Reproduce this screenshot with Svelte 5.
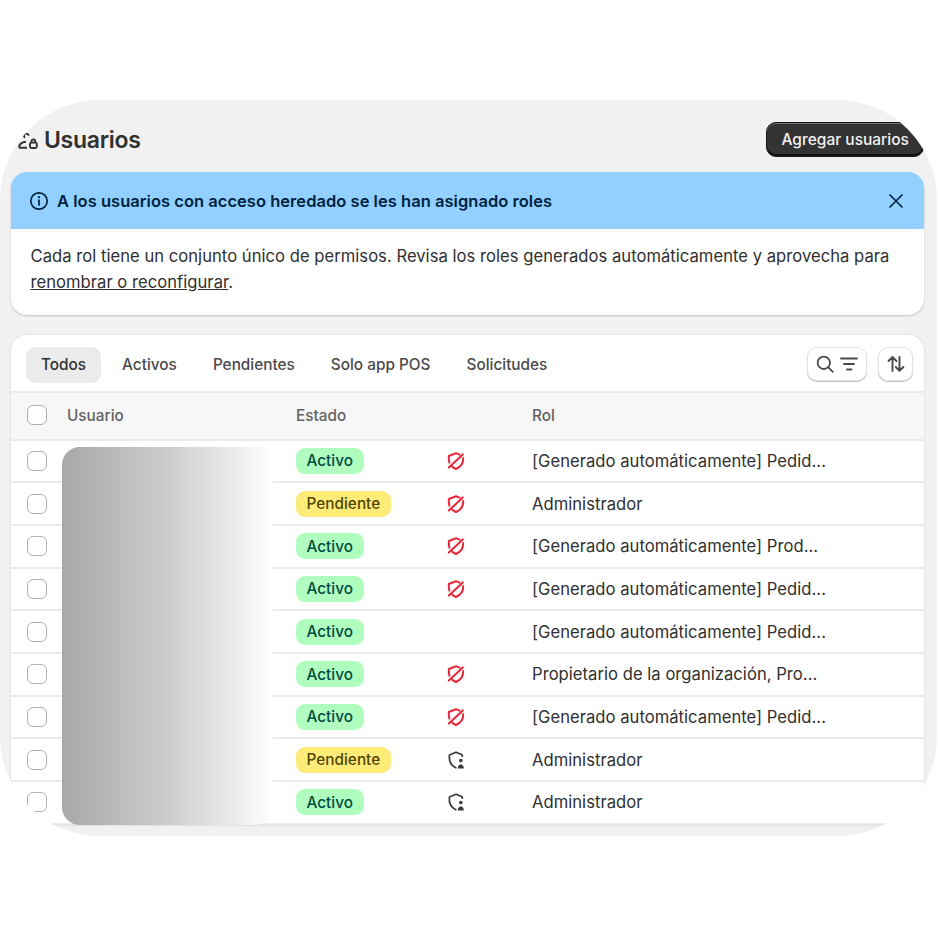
<script>
	const tabs = ['Todos', 'Activos', 'Pendientes', 'Solo app POS', 'Solicitudes'];
	const users = [
		{ status: 'Activo', shield: 'off', role: '[Generado automáticamente] Pedid...' },
		{ status: 'Pendiente', shield: 'off', role: 'Administrador' },
		{ status: 'Activo', shield: 'off', role: '[Generado automáticamente] Prod...' },
		{ status: 'Activo', shield: 'off', role: '[Generado automáticamente] Pedid...' },
		{ status: 'Activo', shield: '', role: '[Generado automáticamente] Pedid...' },
		{ status: 'Activo', shield: 'off', role: 'Propietario de la organización, Pro...' },
		{ status: 'Activo', shield: 'off', role: '[Generado automáticamente] Pedid...' },
		{ status: 'Pendiente', shield: 'person', role: 'Administrador' },
		{ status: 'Activo', shield: 'person', role: 'Administrador' }
	];
</script>

<div class="page">
	<main class="panel">
		<header class="top">
			<h1>
				<svg class="title-icon" viewBox="0 0 20 16" width="20" height="16" fill="none" stroke="#303030" stroke-width="1.900">
					<path d="M7 4.600a2.300 2.300 0 1 1 3.600-1.900" />
					<path d="M1 14.600c.2-3.200 2.600-5.400 7-5.800M1 14.800h8" />
					<rect x="12" y="9.600" width="6.800" height="5.400" rx="1.500" />
					<path d="M13.600 9.600V8.200a1.800 1.800 0 0 1 3.600 0v1.400" />
				</svg>
				Usuarios
			</h1>
			<button class="primary">Agregar usuarios</button>
		</header>

		<section class="banner">
			<div class="banner-head">
				<svg viewBox="0 0 20 20" width="20" height="20" fill="none" stroke="#00233f" stroke-width="1.700">
					<circle cx="10" cy="10" r="8.200" />
					<path d="M10 9.200v4.800" stroke-linecap="round" />
					<circle cx="10" cy="6.200" r="1.100" fill="#00233f" stroke="none" />
				</svg>
				<strong>A los usuarios con acceso heredado se les han asignado roles</strong>
				<svg class="close" viewBox="0 0 16 16" width="16" height="16" fill="none" stroke="#00233f" stroke-width="1.700" stroke-linecap="round">
					<path d="M2 2l12 12M14 2L2 14" />
				</svg>
			</div>
			<p>
				Cada rol tiene un conjunto único de permisos. Revisa los roles generados automáticamente y aprovecha para
				<a href="#roles">renombrar o reconfigurar</a>.
			</p>
		</section>

		<section class="card">
			<div class="toolbar">
				<nav class="tabs">
					{#each tabs as tab, i}
						<span class="tab" class:active={i === 0}>{tab}</span>
					{/each}
				</nav>
				<div class="tools">
					<button class="tool wide" aria-label="Buscar y filtrar">
						<svg viewBox="0 0 20 20" width="20" height="20" fill="none" stroke="#4a4a4a" stroke-width="1.800" stroke-linecap="round">
							<circle cx="8.800" cy="8.800" r="6.200" />
							<path d="M13.200 13.200l4.600 4.600" />
						</svg>
						<svg viewBox="0 0 20 20" width="20" height="20" fill="none" stroke="#4a4a4a" stroke-width="1.800" stroke-linecap="round">
							<path d="M2 4.500h16M5 10h10M8 15.500h4.500" />
						</svg>
					</button>
					<button class="tool" aria-label="Ordenar">
						<svg viewBox="0 0 20 20" width="20" height="20" fill="none" stroke="#4a4a4a" stroke-width="1.900" stroke-linecap="round" stroke-linejoin="round">
							<path d="M6.500 17V3.200M2.500 7l4-4 4 4M13.500 3v13.800M9.800 13l3.700 3.800 3.900-3.800" />
						</svg>
					</button>
				</div>
			</div>

			<div class="row head">
				<span class="check"></span>
				<span>Usuario</span>
				<span>Estado</span>
				<span></span>
				<span>Rol</span>
			</div>

			{#each users as user}
				<div class="row">
					<span class="check"></span>
					<span></span>
					<span><span class="badge" class:pending={user.status === 'Pendiente'}>{user.status}</span></span>
					<span class="shield">
						{#if user.shield === 'off'}
							<svg viewBox="0 0 20 20" width="20" height="20" fill="none" stroke="#e8283c" stroke-width="2" stroke-linecap="round" stroke-linejoin="round">
								<path d="M2.800 16.600L16.800 3.400" />
								<path d="M3.400 11.600C2.800 9.800 2.600 7.600 2.900 5L10 2.200l3.600 1.500M17.200 7c.2 5-2.200 8.900-7.200 11-1.600-.7-2.900-1.500-3.900-2.500" />
							</svg>
						{:else if user.shield === 'person'}
							<svg viewBox="0 0 20 20" width="20" height="20" fill="none" stroke="#3a3a3a" stroke-width="1.700" stroke-linecap="round" stroke-linejoin="round">
								<path d="M16.400 6.200L16 4.800 10 2.200 3.400 5C2.800 10.800 5 15.600 9.800 17.800" />
								<circle cx="14.800" cy="10.600" r="1.800" fill="#3a3a3a" stroke="none" />
								<path d="M11.800 18.400c0-2.800 1.300-4 3-4s3 1.200 3 4z" fill="#3a3a3a" stroke="none" />
							</svg>
						{/if}
					</span>
					<span class="role">{user.role}</span>
				</div>
			{/each}
		</section>

		<div class="redaction"></div>
	</main>
</div>

<style>
	:global(body) {
		background: #fff;
	}

	.page {
		width: 938px;
		height: 938px;
		padding-top: 100px;
		box-sizing: border-box;
		font-family: Inter, 'Liberation Sans', sans-serif;
		color: #303030;
	}

	.panel {
		position: relative;
		width: 937px;
		height: 736px;
		padding: 22px 13px 0 10.500px;
		box-sizing: border-box;
		background: #f1f1f1;
		border-radius: 100px;
		overflow: hidden;
	}

	.top {
		display: flex;
		justify-content: space-between;
		align-items: center;
		height: 35px;
		margin-bottom: 15px;
	}

	h1 {
		display: flex;
		align-items: center;
		gap: 6px;
		margin: 0 0 0 7.500px;
		font-size: 23px;
		font-weight: 600;
		letter-spacing: -0.3px;
	}

	.title-icon {
		margin-top: 2px;
	}

	.primary {
		width: 158px;
		height: 35px;
		padding: 0 0 0 14.500px;
		text-align: left;
		border: 1px solid #1a1a1a;
		border-radius: 10px;
		background: #333;
		box-shadow: inset 0 1px 0 #707070, inset 0 -2px 0 #111;
		color: #f2f2f2;
		font: 500 15.500px Inter, sans-serif;
	}

	.banner {
		border-radius: 16px;
		background: #fff;
		overflow: hidden;
		box-shadow: 0 1px 2px rgba(0, 0, 0, 0.2);
		margin-bottom: 20px;
	}

	.banner-head {
		display: flex;
		align-items: center;
		gap: 8px;
		height: 57px;
		padding: 0 20px 0 18.500px;
		background: #91d0ff;
		color: #00233f;
		font-size: 16.500px;
	}

	.banner-head strong {
		flex: 1;
		font-weight: 600;
		letter-spacing: 0.030px;
	}

	.banner p {
		margin: 0;
		padding: 14px 20px 20px;
		font-size: 16.600px;
		line-height: 26px;
		letter-spacing: 0.030px;
	}

	.banner a {
		color: inherit;
	}

	.card {
		height: 489px;
		border-radius: 16px 16px 0 0;
		background: #fff;
		box-shadow: 0 0 0 1px #e6e6e6, 0 1px 2px rgba(0, 0, 0, 0.2);
		overflow: hidden;
	}

	.toolbar {
		display: flex;
		justify-content: space-between;
		align-items: flex-start;
		height: 44px;
		padding: 12px 11px 0 15.500px;
		border-bottom: 2px solid #ebebeb;
	}

	.tabs {
		display: flex;
		gap: 6px;
	}

	.tab {
		display: flex;
		align-items: center;
		height: 35px;
		padding: 0 15px 1px;
		border-radius: 9px;
		color: #4a4a4a;
		font-size: 15.350px;
		font-weight: 500;
	}

	.tab.active {
		background: #ebebeb;
		color: #303030;
	}

	.tools {
		display: flex;
		gap: 11px;
	}

	.tool {
		display: flex;
		align-items: center;
		justify-content: center;
		gap: 4px;
		width: 35px;
		height: 34px;
		padding: 0;
		border: 1px solid #e3e3e3;
		border-radius: 10px;
		background: #fff;
		box-shadow: 0 1px 1px rgba(0, 0, 0, 0.25);
	}

	.tool.wide {
		width: 60px;
	}

	.row {
		display: grid;
		grid-template-columns: 40px 229px 150px 86px 1fr;
		align-items: center;
		height: 42.700px;
		padding-left: 16.500px;
		box-sizing: border-box;
		border-bottom: 2px solid #ebebeb;
		font-size: 16.600px;
		letter-spacing: 0.030px;
	}

	.row.head {
		height: 47.500px;
		padding-bottom: 1px;
		background: #f7f7f7;
		color: #616161;
		font-size: 15.300px;
		font-weight: 500;
	}

	.check {
		width: 20px;
		height: 20px;
		box-sizing: border-box;
		border: 1.500px solid #b0b0b0;
		border-radius: 6px;
		background: #fff;
	}

	.badge {
		display: inline-flex;
		align-items: center;
		height: 26px;
		padding: 0 10.500px;
		border-radius: 9px;
		background: #affebf;
		color: #014b40;
		font-size: 15.300px;
		font-weight: 500;
	}

	.badge.pending {
		background: #ffeb78;
		color: #4f4700;
	}

	.shield {
		display: flex;
	}

	.role {
		white-space: nowrap;
	}

	.redaction {
		position: absolute;
		left: 62px;
		top: 347px;
		width: 211px;
		height: 378px;
		border-radius: 18px;
		background: linear-gradient(90deg, #a8a8a8, #c8c8c8 45%, #e8e8e8 78%, #fff 100%);
	}
</style>
